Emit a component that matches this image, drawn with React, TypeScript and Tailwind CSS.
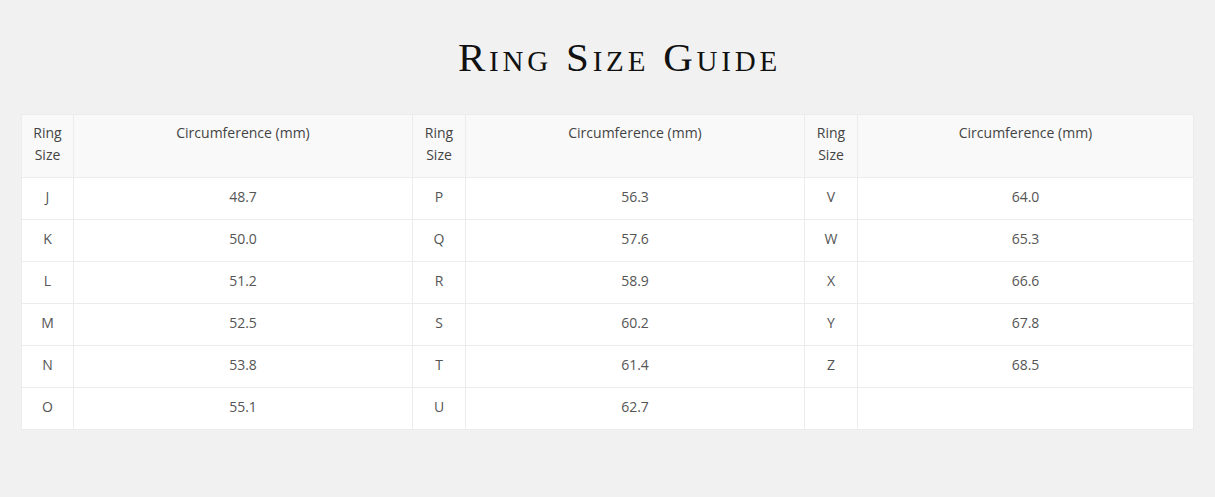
import React from 'react';

const rows: [string, string, string, string, string, string][] = [
  ['J', '48.7', 'P', '56.3', 'V', '64.0'],
  ['K', '50.0', 'Q', '57.6', 'W', '65.3'],
  ['L', '51.2', 'R', '58.9', 'X', '66.6'],
  ['M', '52.5', 'S', '60.2', 'Y', '67.8'],
  ['N', '53.8', 'T', '61.4', 'Z', '68.5'],
  ['O', '55.1', 'U', '62.7', '', ''],
];

export default function App() {
  return (
    <div className="min-h-[497px] bg-[#f1f1f1] px-[21px] pt-[33px] pb-[69px] font-['Open_Sans',sans-serif]">
      <h1 className="text-center pl-[24px] font-['Liberation_Serif',serif] text-[41px] leading-[48px] text-[#111] tracking-[3.8px] [font-variant:small-caps] mb-[33px]">
        Ring Size Guide
      </h1>
      <table className="w-full table-fixed border-collapse text-[14px] text-[#555]">
        <colgroup>
          <col className="w-[52px]" />
          <col className="w-[339px]" />
          <col className="w-[53px]" />
          <col className="w-[339px]" />
          <col className="w-[53px]" />
          <col />
        </colgroup>
        <thead>
          <tr className="bg-[#f9f9f9] h-[63px]">
            {[0, 1, 2].map(i => (
              <React.Fragment key={i}>
                <th className="border border-[#ececec] align-top pt-[7px] font-normal text-[#444] leading-[22px]">
                  Ring<br />Size
                </th>
                <th className="border border-[#ececec] align-top pt-[7px] font-normal text-[#444] leading-[22px]">
                  Circumference (mm)
                </th>
              </React.Fragment>
            ))}
          </tr>
        </thead>
        <tbody>
          {rows.map((r, i) => (
            <tr key={i} className="bg-white h-[42px]">
              {r.map((c, j) => (
                <td key={j} className="border border-[#ececec] text-center align-middle pb-[4px]">
                  {c}
                </td>
              ))}
            </tr>
          ))}
        </tbody>
      </table>
    </div>
  );
}
